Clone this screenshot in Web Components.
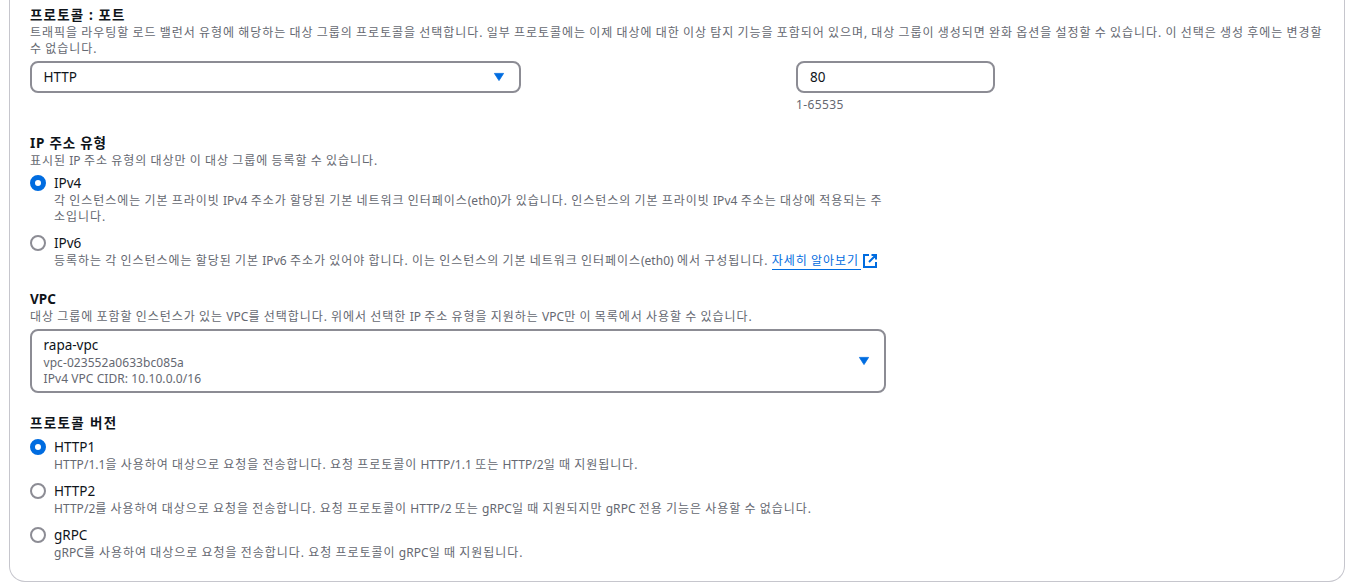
<!DOCTYPE html>
<html lang="ko">
<head>
  <meta charset="utf-8">
  <title>대상 그룹</title>
  <style>
    body {
      margin: 0;
      background: #ffffff;
      overflow: hidden;
      color: #0f141a;
      font-family: "Noto Sans", "Noto Sans CJK KR", sans-serif;
      font-size: 14px;
      line-height: 20px;
      white-space: nowrap;
    }

    /* latin words inside korean copy keep their own spacing */
    .en {
      letter-spacing: 0.04px;
    }
  </style>
</head>
<body>
  <settings-panel>
    <form-field label="프로토콜 : 포트" style="--label-track: 1.15px">
      <span slot="description">트래픽을 라우팅할 로드 밸런서 유형에 해당하는 대상 그룹의 프로토콜을 선택합니다. 일부 프로토콜에는 이제 대상에 대한 이상 탐지 기능을 포함되어 있으며, 대상 그룹이 생성되면 완화 옵션을 설정할 수 있습니다. 이 선택은 생성 후에는 변경할<br>수 없습니다.</span>
      <field-row>
        <select-box>HTTP</select-box>
        <number-input value="80" hint="1-65535"></number-input>
      </field-row>
    </form-field>

    <form-field label="IP 주소 유형" style="--label-track: 0.8px">
      <span slot="description">표시된 <span class="en">IP</span> 주소 유형의 대상만 이 대상 그룹에 등록할 수 있습니다.</span>
      <radio-option label="IPv4" checked>각 인스턴스에는 기본 프라이빗 <span class="en">IPv4</span> 주소가 할당된 기본 네트워크 인터페이스<span class="en">(eth0)</span>가 있습니다. 인스턴스의 기본 프라이빗 <span class="en">IPv4</span> 주소는 대상에 적용되는 주<br>소입니다.</radio-option>
      <radio-option label="IPv6">등록하는 각 인스턴스에는 할당된 기본 <span class="en">IPv6</span> 주소가 있어야 합니다. 이는 인스턴스의 기본 네트워크 인터페이스<span class="en">(eth0)</span> 에서 구성됩니다. <external-link>자세히 알아보기</external-link></radio-option>
    </form-field>

    <form-field label="VPC">
      <span slot="description">대상 그룹에 포함할 인스턴스가 있는 <span class="en">VPC</span>를 선택합니다. 위에서 선택한 <span class="en">IP</span> 주소 유형을 지원하는 <span class="en">VPC</span>만 이 목록에서 사용할 수 있습니다.</span>
      <select-box wide>rapa-vpc
        <span slot="detail">vpc-023552a0633bc085a</span>
        <span slot="detail">IPv4 VPC CIDR: 10.10.0.0/16</span>
      </select-box>
    </form-field>

    <form-field label="프로토콜 버전" style="--label-track: 1.35px">
      <radio-option label="HTTP1" checked><span class="en">HTTP/1.1</span>을 사용하여 대상으로 요청을 전송합니다. 요청 프로토콜이 <span class="en">HTTP/1.1</span> 또는 <span class="en">HTTP/2</span>일 때 지원됩니다.</radio-option>
      <radio-option label="HTTP2"><span class="en">HTTP/2</span>를 사용하여 대상으로 요청을 전송합니다. 요청 프로토콜이 <span class="en">HTTP/2</span> 또는 <span class="en">gRPC</span>일 때 지원되지만 <span class="en">gRPC</span> 전용 기능은 사용할 수 없습니다.</radio-option>
      <radio-option label="gRPC"><span class="en">gRPC</span>를 사용하여 대상으로 요청을 전송합니다. 요청 프로토콜이 <span class="en">gRPC</span>일 때 지원됩니다.</radio-option>
    </form-field>
  </settings-panel>

  <script>
    class SettingsPanel extends HTMLElement {
      constructor() {
        super();
        this.attachShadow({ mode: 'open' });
        this.shadowRoot.innerHTML = `
          <style>
            :host {
              display: flex;
              flex-direction: column;
              gap: 20px;
              box-sizing: border-box;
              width: 1336px;
              height: 582px;
              margin-left: 9px;
              padding: 5px 20px 20px;
              border: 1px solid #c6c6cd;
              border-top: none;
              border-radius: 0 0 16px 16px;
            }
          </style>
          <slot></slot>
        `;
      }
    }

    class FormField extends HTMLElement {
      constructor() {
        super();
        this.attachShadow({ mode: 'open' });
        this.shadowRoot.innerHTML = `
          <style>
            :host { display: block; }
            .label {
              font-weight: 700;
              font-size: 13.5px;
              letter-spacing: var(--label-track, 0);
            }
            .description {
              display: block;
              color: #656871;
              font-size: 12px;
              line-height: 16px;
              letter-spacing: 0.96px;
              word-spacing: -0.83px;
            }
            .control {
              display: flex;
              flex-direction: column;
              gap: 8px;
              margin-top: 4px;
            }
          </style>
          <div class="label">${this.getAttribute('label')}</div>
          <slot name="description" class="description"></slot>
          <div class="control"><slot></slot></div>
        `;
      }
    }

    class FieldRow extends HTMLElement {
      constructor() {
        super();
        this.attachShadow({ mode: 'open' });
        this.shadowRoot.innerHTML = `
          <style>
            :host {
              display: grid;
              grid-template-columns: 491px 199px;
              column-gap: 275px;
              align-items: start;
            }
          </style>
          <slot></slot>
        `;
      }
    }

    class SelectBox extends HTMLElement {
      constructor() {
        super();
        this.attachShadow({ mode: 'open' });
        this.shadowRoot.innerHTML = `
          <style>
            :host {
              display: flex;
              align-items: center;
              justify-content: space-between;
              box-sizing: border-box;
              height: 32px;
              padding: 0 14px 0 11.5px;
              border: 2px solid #8c8c94;
              border-radius: 8px;
              font-size: 13.5px;
            }
            :host([wide]) {
              width: 856px;
              height: 64px;
            }
            .details {
              display: flex;
              flex-direction: column;
              color: #656871;
              font-size: 12px;
              line-height: 16px;
              letter-spacing: 0.07px;
            }
            svg {
              display: block;
              fill: #006ce0;
            }
          </style>
          <div>
            <div><slot></slot></div>
            <div class="details"><slot name="detail"></slot></div>
          </div>
          <svg width="12" height="10" viewBox="0 0 12 10"><path d="M1.4 1.4h9.2L6 8.6z" stroke="#006ce0" stroke-width=".8" stroke-linejoin="round"/></svg>
        `;
      }
    }

    class NumberInput extends HTMLElement {
      constructor() {
        super();
        this.attachShadow({ mode: 'open' });
        this.shadowRoot.innerHTML = `
          <style>
            :host { display: block; }
            .box {
              box-sizing: border-box;
              height: 32px;
              padding: 4px 12px;
              border: 2px solid #8c8c94;
              border-radius: 8px;
              font-size: 13.5px;
            }
            .hint {
              margin-top: 4px;
              color: #656871;
              font-size: 12px;
              line-height: 16px;
              letter-spacing: 0.4px;
            }
          </style>
          <div class="box">${this.getAttribute('value')}</div>
          <div class="hint">${this.getAttribute('hint')}</div>
        `;
      }
    }

    class RadioOption extends HTMLElement {
      constructor() {
        super();
        this.attachShadow({ mode: 'open' });
        this.shadowRoot.innerHTML = `
          <style>
            :host {
              display: grid;
              grid-template-columns: 16px auto;
              column-gap: 8px;
              justify-content: start;
            }
            .dot {
              box-sizing: border-box;
              width: 16px;
              height: 16px;
              margin-top: 2px;
              border: 2px solid #8c8c94;
              border-radius: 50%;
            }
            :host([checked]) .dot {
              border: 5px solid #006ce0;
            }
            .label { font-size: 13.5px; }
            .description {
              color: #656871;
              font-size: 12px;
              line-height: 16px;
              letter-spacing: 0.96px;
              word-spacing: -0.83px;
            }
          </style>
          <div class="dot"></div>
          <div>
            <div class="label">${this.getAttribute('label')}</div>
            <div class="description"><slot></slot></div>
          </div>
        `;
      }
    }

    class ExternalLink extends HTMLElement {
      constructor() {
        super();
        this.attachShadow({ mode: 'open' });
        this.shadowRoot.innerHTML = `
          <style>
            :host {
              display: inline-flex;
              height: 16px;
              vertical-align: top;
              color: #006ce0;
            }
            .text {
              height: 16px;
              padding-right: 2px;
              border-bottom: 1px solid #006ce0;
            }
            svg {
              margin-left: 1px;
              fill: none;
              stroke: #006ce0;
              stroke-width: 2;
            }
          </style>
          <span class="text"><slot></slot></span>
          <svg width="16" height="16" viewBox="0 0 16 16"><path d="M7 2H2v12h12V9M9.5 2H14v4.5M13.5 2.5L7 9"/></svg>
        `;
      }
    }

    customElements.define('settings-panel', SettingsPanel);
    customElements.define('form-field', FormField);
    customElements.define('field-row', FieldRow);
    customElements.define('select-box', SelectBox);
    customElements.define('number-input', NumberInput);
    customElements.define('radio-option', RadioOption);
    customElements.define('external-link', ExternalLink);
  </script>
</body>
</html>
